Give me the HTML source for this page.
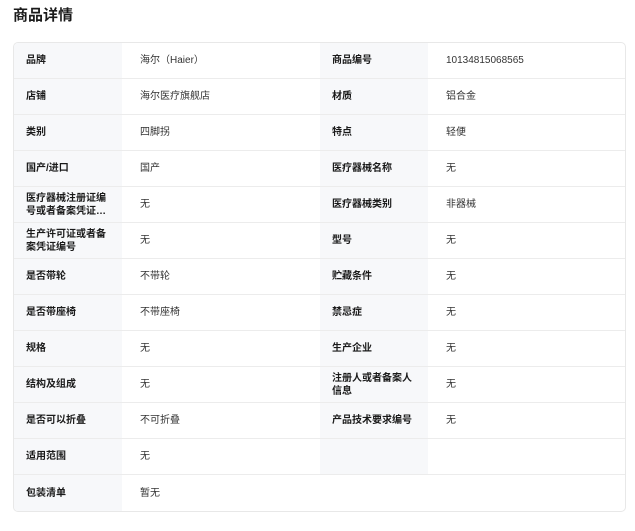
<!DOCTYPE html>
<html><head><meta charset="utf-8"><style>
*{margin:0;padding:0;box-sizing:border-box}
body{width:635px;height:531px;background:#fff;font-family:"Liberation Sans","Noto Sans CJK SC",sans-serif;position:relative;overflow:hidden}
h1{position:absolute;left:13px;top:6px;font-size:15px;font-weight:bold;color:#1a1a1a;line-height:20px}
.card{position:absolute;left:13px;top:42px;width:613px;height:470px;border:1px solid #e8e8e8;border-radius:5px;overflow:hidden}
.row{display:flex;height:36px;border-bottom:1px solid #ececec}
.row:last-child{border-bottom:none}
.l,.v{display:flex;align-items:center;font-size:10px;line-height:13px;color:#333}
.l{background:#f7f8fa;font-weight:bold;color:#1a1a1a;padding-left:12px;padding-right:8px}
.v{padding-left:18px}
.l1{width:108px}.v1{width:198px}.l2{width:108px}.v2{flex:1}
.v.full{flex:1}
</style></head><body>
<h1>商品详情</h1>
<div class="card">
<div class="row"><div class="l l1">品牌</div><div class="v v1">海尔（Haier）</div><div class="l l2">商品编号</div><div class="v v2">10134815068565</div></div>
<div class="row"><div class="l l1">店铺</div><div class="v v1">海尔医疗旗舰店</div><div class="l l2">材质</div><div class="v v2">铝合金</div></div>
<div class="row"><div class="l l1">类别</div><div class="v v1">四脚拐</div><div class="l l2">特点</div><div class="v v2">轻便</div></div>
<div class="row"><div class="l l1">国产/进口</div><div class="v v1">国产</div><div class="l l2">医疗器械名称</div><div class="v v2">无</div></div>
<div class="row"><div class="l l1">医疗器械注册证编号或者备案凭证…</div><div class="v v1">无</div><div class="l l2">医疗器械类别</div><div class="v v2">非器械</div></div>
<div class="row"><div class="l l1">生产许可证或者备案凭证编号</div><div class="v v1">无</div><div class="l l2">型号</div><div class="v v2">无</div></div>
<div class="row"><div class="l l1">是否带轮</div><div class="v v1">不带轮</div><div class="l l2">贮藏条件</div><div class="v v2">无</div></div>
<div class="row"><div class="l l1">是否带座椅</div><div class="v v1">不带座椅</div><div class="l l2">禁忌症</div><div class="v v2">无</div></div>
<div class="row"><div class="l l1">规格</div><div class="v v1">无</div><div class="l l2">生产企业</div><div class="v v2">无</div></div>
<div class="row"><div class="l l1">结构及组成</div><div class="v v1">无</div><div class="l l2">注册人或者备案人信息</div><div class="v v2">无</div></div>
<div class="row"><div class="l l1">是否可以折叠</div><div class="v v1">不可折叠</div><div class="l l2">产品技术要求编号</div><div class="v v2">无</div></div>
<div class="row"><div class="l l1">适用范围</div><div class="v v1">无</div><div class="l l2"></div><div class="v v2"></div></div>
<div class="row"><div class="l l1">包装清单</div><div class="v full">暂无</div></div>
</div>
</body></html>
